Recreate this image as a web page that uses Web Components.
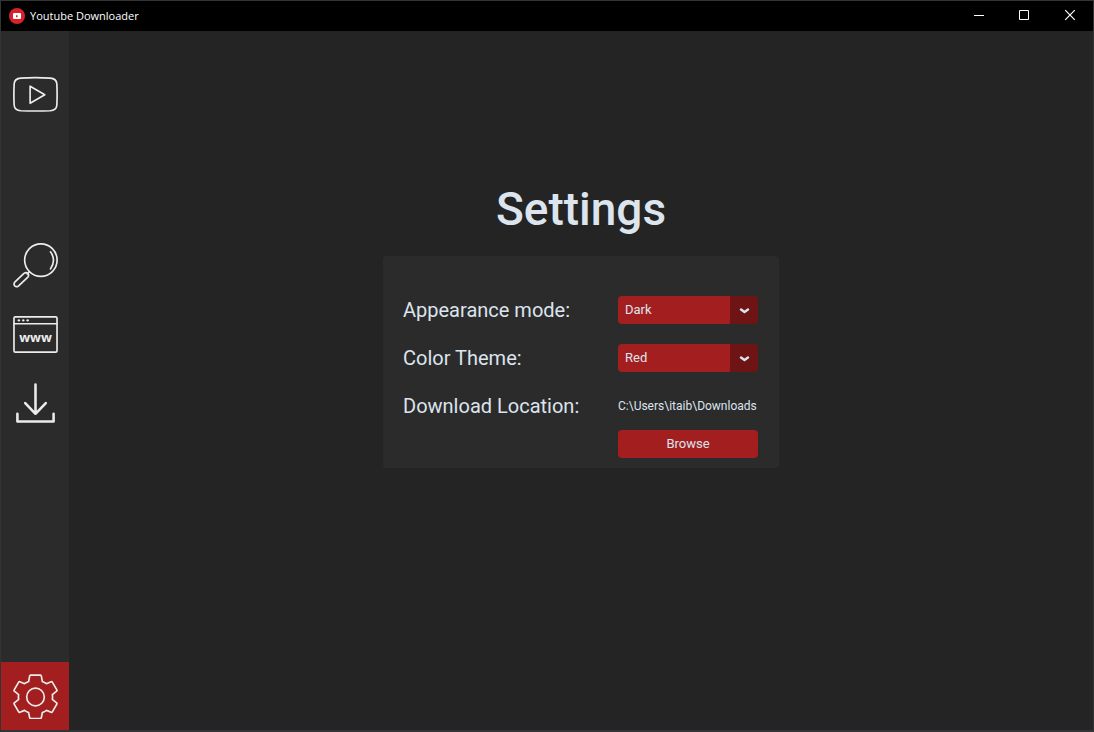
<!DOCTYPE html>
<html lang="en">
<head>
<meta charset="utf-8">
<title>Youtube Downloader</title>
<style>
html { --bg: #242424; --panel: #2b2b2b; --accent: #a31f1f; --accent-dark: #6f1414; --text: #dce4ee; }
body { margin: 0; background: var(--bg); color: var(--text); font-family: Roboto, "Liberation Sans", sans-serif; font-size: 13px; }
</style>
</head>
<body>
<app-window></app-window>
<script>
const define = (name, html, setup) => customElements.define(name, class extends HTMLElement {
  constructor() {
    super();
    this.attachShadow({ mode: "open" }).innerHTML = html;
  }
  connectedCallback() { if (setup) setup(this, this.shadowRoot); }
});

define("title-bar", `
<style>
:host { display: flex; align-items: center; height: 30px; background: #000; color: #fff; }
.logo { width: 16px; height: 16px; margin: 0 5px 0 8px; }
span { flex: 1; font: 11px/16px "Open Sans", "Noto Sans", sans-serif; }
button { box-sizing: border-box; width: 46px; height: 30px; padding: 0 0 2px; border: 0; background: none; color: inherit; display: grid; place-items: center; }
.caption { width: 10px; height: 10px; overflow: visible; }
</style>
<svg class="logo" viewBox="0 0 16 16"><circle cx="8" cy="8" r="8" fill="#d4232b"/><rect x="4" y="5" width="8" height="6" rx="1" fill="#fff"/><path d="M7 7l2.400 1L7 9.400z" fill="#d4232b"/></svg>
<span>Youtube Downloader</span>
<button aria-label="Minimize"><svg class="caption"><path d="M1 5.500h10" stroke="#fff"/></svg></button>
<button aria-label="Maximize"><svg class="caption"><path d="M.5.5h9v9h-9z" fill="none" stroke="#fff"/></svg></button>
<button aria-label="Close"><svg class="caption"><path d="M.2.2l9.600 9.600M9.800.2L.2 9.800" fill="none" stroke="#fff" stroke-width="1.200"/></svg></button>
`);

define("nav-button", `
<style>
:host { display: block; }
button { box-sizing: border-box; display: grid; place-items: center; width: 68px; height: 68px; padding: 0 0 0 1px; border: 0; background: none; color: #ececec; }
:host([active]) button { background: var(--accent); }
</style>
<button><slot></slot></button>
`, (host, root) => root.querySelector("button").setAttribute("aria-label", host.getAttribute("label")));

define("side-nav", `
<style>
:host { display: flex; flex-direction: column; width: 68px; padding-top: 29px; box-sizing: border-box; background: var(--panel); }
nav { display: flex; flex-direction: column; gap: 1px; margin: 103px 0 auto; }
svg { width: 45px; height: 45px; fill: none; stroke: currentColor; stroke-width: 1.7; stroke-linejoin: round; stroke-linecap: round; }
text { font: bold 13px "Noto Sans", sans-serif; fill: currentColor; stroke: none; text-anchor: middle; }
</style>
<nav-button label="Video"><svg viewBox="0 0 46 46"><path d="M8 6.200Q23 5.400 38 6.200Q44.400 6.600 44.800 12Q45.400 23 44.800 34Q44.400 39.200 38 39.600Q23 40.200 8 39.600Q1.600 39.200 1.200 34Q.6 23 1.200 12Q1.600 6.600 8 6.200z"/><path d="M17.500 14.500v17.500L32.500 23.200z"/></svg></nav-button>
<nav>
<nav-button label="Search"><svg viewBox="0 0 46 46"><circle cx="28.500" cy="17.500" r="16.600"/><path d="M38.300 9Q44.500 17.500 38.300 26.500"/><path d="M16.500 29.500l-2 2"/><path d="M11.200 31Q13.500 29.500 15 31Q16.800 32.800 15.200 34.800L5.500 44Q3.500 45.500 1.800 43.800Q.3 42 1.800 40z"/></svg></nav-button>
<nav-button label="Browser"><svg viewBox="0 0 46 46"><rect x="1" y="5" width="44" height="36" rx="1.500"/><path d="M1 12h44"/><g fill="currentColor" stroke="none"><circle cx="6" cy="8.500" r="1.200"/><circle cx="10.500" cy="8.500" r="1.200"/><circle cx="15" cy="8.500" r="1.200"/></g><text x="23" y="31">www</text></svg></nav-button>
<nav-button label="Downloads"><svg viewBox="0 0 46 46"><g stroke-width="2.600"><path d="M23 3.500v29.500M12.500 22.500l10.500 11L33.500 22.500"/><path d="M4.500 33.500v8h37v-8"/></g></svg></nav-button>
</nav>
<nav-button label="Settings" active><svg viewBox="0 0 46 46"><circle cx="23" cy="23.500" r="9"/><path d="M18 1.200h10q.8 0 1 1l1 5.500q2.200.8 4.200 2.200l4.800-2q.8-.3 1.200.4l4.600 8q.4.700-.2 1.200l-4.400 3.600q.5 2.400 0 4.900l4.400 3.600q.6.500.2 1.200l-4.600 8q-.4.700-1.200.4l-4.800-2q-2 1.500-4.200 2.300l-1 5q-.2 1-1 1H18q-.8 0-1-1l-1-5q-2.200-.8-4.200-2.300l-4.800 2q-.8.300-1.200-.4l-4.600-8q-.4-.7.200-1.200L5.800 26q-.5-2.500 0-4.900L1.400 17.500q-.6-.5-.2-1.200l4.600-8q.4-.7 1.200-.4l4.800 2q2-1.400 4.200-2.200l1-5.500q.2-1 1-1z"/></svg></nav-button>
`);

define("option-menu", `
<style>
:host { display: block; position: relative; width: 140px; }
select { appearance: none; display: block; width: 100%; height: 28px; padding: 0 35px 1px 7px; border: 0; border-radius: 4px; color: inherit; font: inherit; background: linear-gradient(var(--accent-dark) 0 0) right / 28px 100% no-repeat var(--accent); }
svg { position: absolute; right: 8px; top: 12px; width: 11px; height: 7px; pointer-events: none; }
</style>
<select></select>
<svg viewBox="0 0 11 7"><path d="M2 1.500L5.500 4L9 1.500" fill="none" stroke="#dce4ee" stroke-width="2.400" stroke-linecap="round" stroke-linejoin="round"/></svg>
`, (host, root) => {
  const select = root.querySelector("select");
  select.setAttribute("aria-label", host.getAttribute("label"));
  select.replaceChildren(...host.getAttribute("options").split(",").map(t => new Option(t)));
});

define("settings-row", `
<style>
:host { display: flex; align-items: center; justify-content: space-between; height: 28px; }
.name { font-size: 20px; line-height: 28px; }
.value { width: 141px; white-space: nowrap; }
</style>
<span class="name"><slot name="name"></slot></span>
<div class="value"><slot></slot></div>
`);

define("settings-page", `
<style>
:host { display: flex; flex-direction: column; align-items: center; flex: 1; padding-top: 152px; }
h1 { margin: 0 0 20px; font-size: 46px; line-height: 53px; font-weight: 500; }
section { display: flex; flex-direction: column; gap: 20px; width: 396px; box-sizing: border-box; padding: 40px 20px 10px; border-radius: 4px; background: var(--panel); }
.path { display: block; font-size: 12px; line-height: 14px; }
.location { display: grid; gap: 10px; }
button { justify-self: end; width: 140px; height: 28px; margin-right: 1px; padding: 0 0 1px; border: 0; border-radius: 4px; background: var(--accent); color: inherit; font: inherit; }
</style>
<h1>Settings</h1>
<section>
<settings-row><span slot="name">Appearance mode:</span><option-menu label="Appearance mode" options="Dark,Light,System"></option-menu></settings-row>
<settings-row><span slot="name">Color Theme:</span><option-menu label="Color Theme" options="Red,Blue,Green"></option-menu></settings-row>
<div class="location">
<settings-row><span slot="name">Download Location:</span><span class="path">C:\\Users\\itaib\\Downloads</span></settings-row>
<button>Browse</button>
</div>
</section>
`);

define("app-window", `
<style>
:host { display: flex; flex-direction: column; min-height: 100vh; box-sizing: border-box; border: 1px solid #343436; border-bottom-width: 2px; background: var(--bg); }
main { display: flex; flex: 1; }
</style>
<title-bar></title-bar>
<main><side-nav></side-nav><settings-page></settings-page></main>
`);
</script>
</body>
</html>
